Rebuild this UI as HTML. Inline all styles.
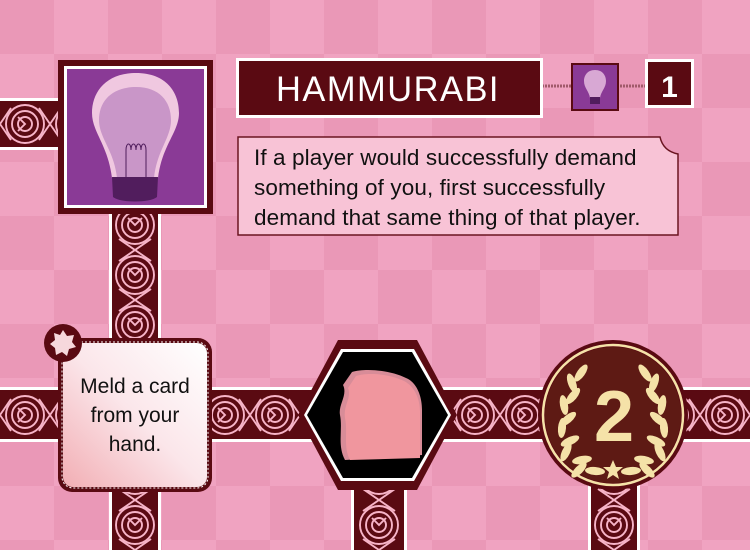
<!DOCTYPE html>
<html><head><meta charset="utf-8"><style>
html,body{margin:0;padding:0;width:750px;height:550px;overflow:hidden}
body{font-family:"Liberation Sans",sans-serif}
.t{position:absolute;color:#111}
</style></head><body>
<svg width="750" height="550" viewBox="0 0 750 550" xmlns="http://www.w3.org/2000/svg" style="position:absolute;left:0;top:0">
<defs>
<pattern id="chk" x="0" y="0" width="108" height="108" patternUnits="userSpaceOnUse">
<rect width="108" height="108" fill="#f0a3c1"/>
<rect width="54" height="54" fill="#ea98b7"/>
<rect x="54" y="54" width="54" height="54" fill="#ea98b7"/>
</pattern>
<g id="motif" fill="none" stroke="#f7b4c8" stroke-width="1.9">
<circle cx="0" cy="0" r="19"/><circle cx="0" cy="0" r="13"/><circle cx="0" cy="0" r="7"/>
<path d="M-7 -7 L0 0 L7 -7"/>
<path d="M-16 -14 L16 -36 M16 -14 L-16 -36"/>
</g>
<pattern id="pv" x="111" y="0" width="48" height="50" patternUnits="userSpaceOnUse">
<rect width="48" height="50" fill="#5a0a12"/>
<use href="#motif" x="24" y="25"/><use href="#motif" x="24" y="75"/>
</pattern>
<pattern id="pv2" x="353" y="0" width="52" height="50" patternUnits="userSpaceOnUse">
<rect width="52" height="50" fill="#5a0a12"/>
<use href="#motif" x="26" y="25"/><use href="#motif" x="26" y="75"/>
</pattern>
<pattern id="pv3" x="590" y="0" width="48" height="50" patternUnits="userSpaceOnUse">
<rect width="48" height="50" fill="#5a0a12"/>
<use href="#motif" x="24" y="25"/><use href="#motif" x="24" y="75"/>
</pattern>
<pattern id="ph" x="0" y="390" width="50" height="50" patternUnits="userSpaceOnUse">
<rect width="50" height="50" fill="#5a0a12"/>
<use href="#motif" transform="translate(25 25) rotate(-90)"/>
<use href="#motif" transform="translate(75 25) rotate(-90)"/>
</pattern>
<pattern id="ph1" x="0" y="100" width="50" height="48" patternUnits="userSpaceOnUse">
<rect width="50" height="48" fill="#5a0a12"/>
<use href="#motif" transform="translate(25 24) rotate(-90)"/>
<use href="#motif" transform="translate(75 24) rotate(-90)"/>
</pattern>
<linearGradient id="mg" x1="1" y1="0" x2="0" y2="1">
<stop offset="0" stop-color="#ffffff"/><stop offset="0.5" stop-color="#fbe6ea"/><stop offset="1" stop-color="#f2aeb4"/>
</linearGradient>
<g id="leaf"><ellipse cx="0" cy="0" rx="4" ry="10"/></g>
</defs>
<rect width="750" height="550" fill="url(#chk)"/>
<rect x="0" y="98" width="70" height="52" fill="#fff"/>
<rect x="0" y="101" width="70" height="46" fill="url(#ph1)"/>
<rect x="109" y="200" width="52" height="350" fill="#fff"/>
<rect x="112" y="200" width="46" height="350" fill="url(#pv)"/>
<rect x="351" y="440" width="56" height="110" fill="#fff"/>
<rect x="354" y="440" width="50" height="110" fill="url(#pv2)"/>
<rect x="588" y="440" width="52" height="110" fill="#fff"/>
<rect x="591" y="440" width="46" height="110" fill="url(#pv3)"/>
<rect x="0" y="387" width="750" height="55" fill="#fff"/>
<rect x="0" y="390" width="750" height="49" fill="url(#ph)"/>
<rect x="58" y="60" width="155" height="154" fill="#5a0a12"/>
<rect x="64" y="66" width="143" height="142" fill="#fff"/>
<rect x="67" y="69" width="137" height="136" fill="#8a3a96"/>
<path d="M136 73 C106 73 92 92 92 113 C92 132 108 145 112 178 L158 178 C162 145 179 132 179 113 C179 92 166 73 136 73 Z" fill="#f0c8e0"/>
<path d="M136 87 C112 87 99 101 99 120 C99 138 114 150 117 178 L154 178 C157 150 171 138 171 120 C171 101 159 87 136 87 Z" fill="#c996c8"/>
<path d="M126 177 L126 150 M146 177 L146 150 M126 150 c0 -8 5 -8 5 0 c0 -8 5 -8 5 0 c0 -8 5 -8 5 0 c0 -8 5 -8 5 0" stroke="#4f1d5c" stroke-width="1" fill="none"/>
<path d="M112 177 L158 177 L157 197 C150 203 120 203 113 197 Z" fill="#511d5d"/>
<line x1="542" y1="86" x2="648" y2="86" stroke="#a05a6a" stroke-width="3" stroke-dasharray="2 1"/>
<rect x="236" y="58" width="307" height="60" fill="#fff"/>
<rect x="239" y="61" width="301" height="54" fill="#5a0a12"/>
<text x="388" y="101" text-anchor="middle" fill="#fff" font-family="Liberation Sans" font-size="35" letter-spacing="1.5" textLength="224" lengthAdjust="spacingAndGlyphs">HAMMURABI</text>
<rect x="571" y="63" width="48" height="48" fill="#5a0a12"/>
<rect x="573" y="65" width="44" height="44" fill="#8a3a96"/>
<path d="M595 70 C587 70 584 76 584 81 C584 88 589 91 590 98 L600 98 C601 91 606 88 606 81 C606 76 603 70 595 70 Z" fill="#d8a8d4"/>
<rect x="590" y="97" width="10" height="7" fill="#511d5d"/>
<rect x="645" y="59" width="49" height="49" fill="#fff"/>
<rect x="648" y="62" width="43" height="43" fill="#5a0a12"/>
<text x="669.5" y="97" text-anchor="middle" fill="#fff" font-family="Liberation Sans" font-weight="bold" font-size="30">1</text>
<path d="M238 137 L660 137 C662 146 668 152 678 154 L678 235 L238 235 Z" fill="#f8c3d6" stroke="#6a1420" stroke-width="1.5"/>
<rect x="58" y="338" width="154" height="154" rx="14" fill="#5a0a12"/>
<rect x="62" y="342" width="146" height="146" rx="11" fill="none" stroke="#fff" stroke-width="1" stroke-dasharray="2 2"/>
<rect x="63" y="343" width="144" height="144" rx="10" fill="url(#mg)"/>
<circle cx="63" cy="343" r="19" fill="#5a0a12"/>
<path d="M63 330 L67 336 L74 335 L72 342 L76 347 L69 349 L67 356 L62 352 L56 355 L55 348 L50 344 L55 340 L54 333 L60 335 Z" fill="#f6d8dc"/>
<polygon points="338,340 417,340 457,415 417,490 338,490 298,415" fill="#5a0a12"/>
<polygon points="341,349 414,349 451,415 414,481 341,481 304,415" fill="#fff"/>
<polygon points="343,352 412,352 448,415 412,478 343,478 307,415" fill="#000"/>
<path d="M352 372 C365 368 390 370 406 378 C416 382 422 395 422 410 L422 455 L345 460 C337 445 343 430 340 415 C338 405 348 395 343 385 Z" fill="#d88c98"/>
<path d="M356 376 C368 372 390 374 404 381 C414 386 420 398 420 412 L420 458 L350 460 C343 447 348 432 345 418 C343 405 352 398 348 388 Z" fill="#f0969e"/>
<circle cx="613" cy="415" r="75" fill="#5a0a12"/>
<circle cx="613" cy="415" r="70" fill="none" stroke="#f5e2a8" stroke-width="2.5"/>
<circle cx="613" cy="415" r="68" fill="#5e1a14"/>
<g fill="#f5e2a8">
<use href="#leaf" transform="translate(581 373) rotate(35)"/>
<use href="#leaf" transform="translate(572 383) rotate(-20)"/>
<use href="#leaf" transform="translate(573 396) rotate(40)"/>
<use href="#leaf" transform="translate(564 405) rotate(-10)"/>
<use href="#leaf" transform="translate(568 419) rotate(50)"/>
<use href="#leaf" transform="translate(562 428) rotate(5)"/>
<use href="#leaf" transform="translate(570 441) rotate(65)"/>
<use href="#leaf" transform="translate(566 452) rotate(25)"/>
<use href="#leaf" transform="translate(582 460) rotate(80)"/>
<use href="#leaf" transform="translate(579 470) rotate(45)"/>
<use href="#leaf" transform="translate(595 471) rotate(95)"/>
<use href="#leaf" transform="translate(645 373) rotate(-35)"/>
<use href="#leaf" transform="translate(654 383) rotate(20)"/>
<use href="#leaf" transform="translate(653 396) rotate(-40)"/>
<use href="#leaf" transform="translate(662 405) rotate(10)"/>
<use href="#leaf" transform="translate(658 419) rotate(-50)"/>
<use href="#leaf" transform="translate(664 428) rotate(-5)"/>
<use href="#leaf" transform="translate(656 441) rotate(-65)"/>
<use href="#leaf" transform="translate(660 452) rotate(-25)"/>
<use href="#leaf" transform="translate(644 460) rotate(-80)"/>
<use href="#leaf" transform="translate(647 470) rotate(-45)"/>
<use href="#leaf" transform="translate(631 471) rotate(-95)"/>
<path d="M613 460 L616 467 L623 467 L617 472 L619 479 L613 475 L607 479 L609 472 L603 467 L610 467 Z"/>
</g>
<text x="614" y="441" text-anchor="middle" fill="#f5e2a8" font-family="Liberation Sans" font-weight="bold" font-size="72">2</text>
</svg>
<div class="t" style="left:254px;top:143px;font-size:22.5px;line-height:30px;width:430px;letter-spacing:0.1px">If a player would successfully demand<br>something of you, first successfully<br>demand that same thing of that player.</div>
<div class="t" style="left:60px;top:372px;width:150px;text-align:center;font-size:21px;line-height:29px">Meld a card<br>from your<br>hand.</div>
</body></html>
